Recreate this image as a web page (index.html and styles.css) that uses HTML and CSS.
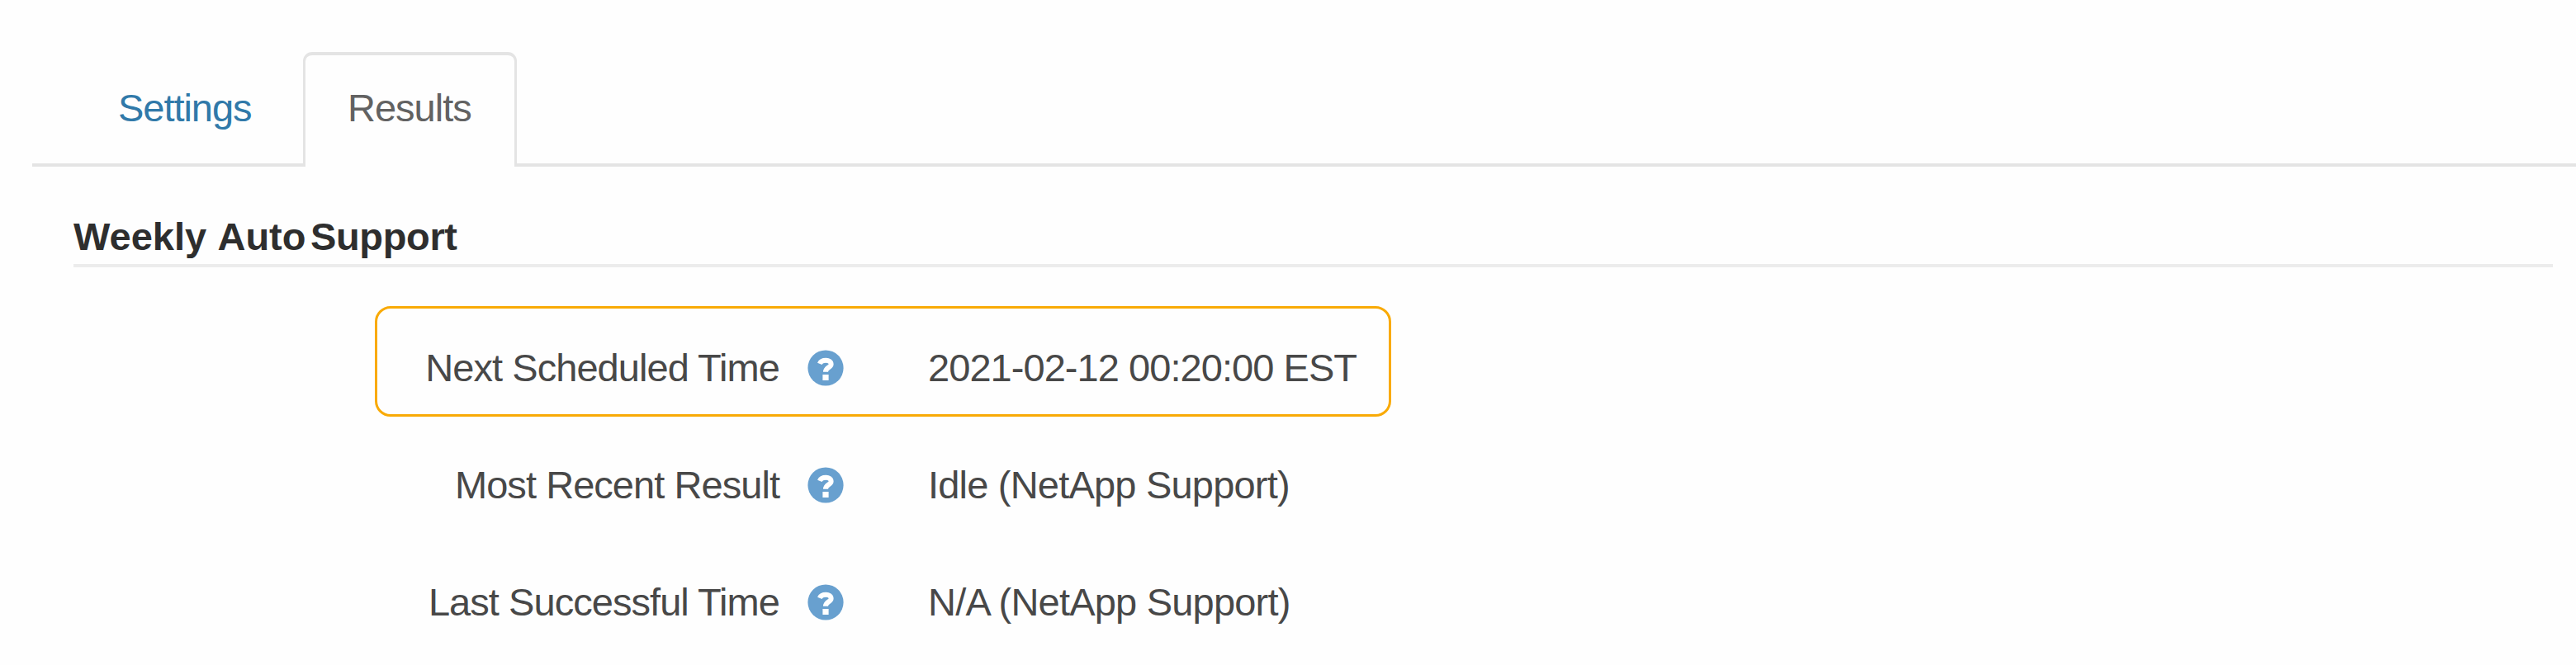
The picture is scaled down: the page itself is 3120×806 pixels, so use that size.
FILE: index.html
```html
<!DOCTYPE html>
<html lang="en">
<head>
<meta charset="utf-8">
<title>AutoSupport</title>
<link rel="stylesheet" href="styles.css">
</head>
<body>
<svg class="defs" aria-hidden="true">
  <symbol id="help" viewBox="0 0 44 44">
    <circle cx="22" cy="22" r="21.6" fill="#68a0cf"/>
    <path d="M14.8 16.8C17 11.6 28.6 11 28.6 17.4C28.6 21.4 22 21.4 22 26.8" fill="none" stroke="#fff" stroke-width="6"/>
    <rect x="18.4" y="30" width="7.2" height="7" fill="#fff"/>
  </symbol>
</svg>
<nav class="tabs">
  <a class="tab">Settings</a>
  <a class="tab tab-active">Results</a>
</nav>
<main class="panel">
  <h2 class="heading">Weekly Aut<span class="heading-gap">o</span><span class="heading-tail">Support</span></h2>
  <dl class="rows">
    <div class="row row-highlight">
      <dt class="label">Next Scheduled Time</dt>
      <dd class="hint"><svg class="help"><use href="#help"/></svg></dd>
      <dd class="value">2021-02-12 00:20:00 EST</dd>
    </div>
    <div class="row">
      <dt class="label">Most Recent Result</dt>
      <dd class="hint"><svg class="help"><use href="#help"/></svg></dd>
      <dd class="value value-support">Idle (NetApp Support)</dd>
    </div>
    <div class="row">
      <dt class="label">Last Successful Time</dt>
      <dd class="hint"><svg class="help"><use href="#help"/></svg></dd>
      <dd class="value value-support">N/A (NetApp Support)</dd>
    </div>
  </dl>
</main>
</body>
</html>
```

FILE: styles.css
```css
*, *::before, *::after { box-sizing: border-box; }

body {
  margin: 0;
  height: 806px;
  overflow: hidden;
  background: #fefefe;
  color: #484848;
  font: 47px/54px "Liberation Sans", Arial, sans-serif;
  letter-spacing: -0.95px;
}

.defs { display: none; }

.tabs {
  display: flex;
  height: 139px;
  margin: 63px 0 0 39px;
}

.tab {
  width: 328px;
  padding: 41px 0 0 104px;
  border-bottom: 4px solid #e4e4e4;
  color: #3079a9;
  letter-spacing: -1.05px;
}

.tab-active {
  width: 259px;
  padding: 37px 0 0 51px;
  border: 3px solid #e4e4e4;
  border-top-width: 4px;
  border-bottom: 0;
  border-radius: 11px 11px 0 0;
  color: #626262;
  letter-spacing: -1px;
}

.tabs::after {
  content: "";
  flex: 1;
  border-bottom: 4px solid #e4e4e4;
}

.panel { padding: 58px 28px 0 89px; }

.heading {
  height: 64px;
  margin: 0;
  border-bottom: 4px solid #ececec;
  color: #2e2e2e;
  font-size: 47px;
  font-weight: bold;
  letter-spacing: 0;
  word-spacing: 2px;
}

.heading-gap { letter-spacing: 5.5px; }

.heading-tail { letter-spacing: -0.35px; }

.rows { margin: 51px 0 0; }

.row {
  position: relative;
  display: grid;
  grid-template-columns: 855px 34px 146px 1fr;
  align-items: center;
  height: 142px;
}

.row-highlight::before {
  content: "";
  position: absolute;
  left: 365px;
  top: -4px;
  width: 1231px;
  height: 134px;
  border: 3px solid #f9aa06;
  border-radius: 19px;
}

.label { text-align: right; }

.hint {
  grid-column: 3;
  height: 44px;
  margin: 0;
}

.help {
  display: block;
  width: 44px;
  height: 44px;
}

.value {
  margin: 0;
  white-space: nowrap;
}

.value-support { letter-spacing: -0.8px; }
```
